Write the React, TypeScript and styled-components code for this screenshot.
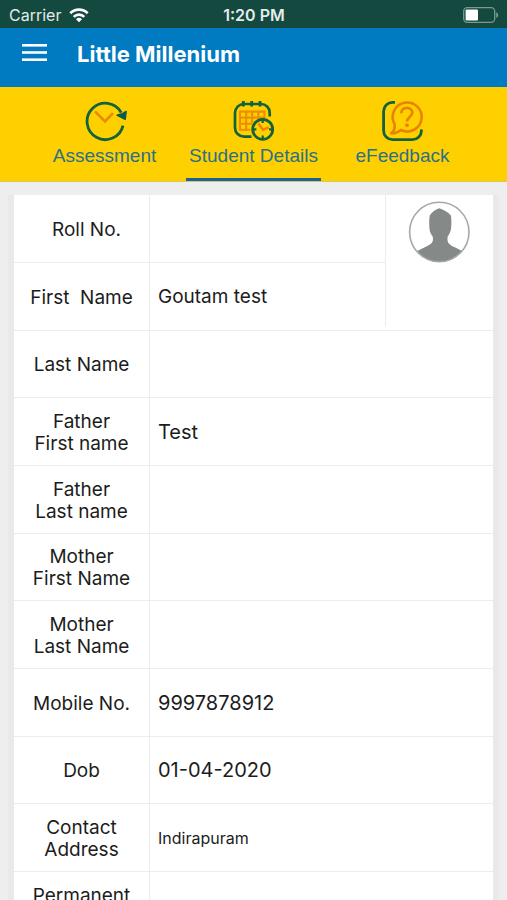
import React from 'react';
import styled, { createGlobalStyle, css } from 'styled-components';

const GlobalStyle = createGlobalStyle`
  *, *::before, *::after { box-sizing: border-box; }
  html, body { margin: 0; padding: 0; background: #eeeeee; }
`;

const Screen = styled.div`
  display: flex;
  flex-direction: column;
  height: 100vh;
  overflow: hidden;
  font-family: Inter, 'Liberation Sans', sans-serif;
  color: #1c1c1c;
`;

const StatusBar = styled.div`
  flex: none;
  display: grid;
  grid-template-columns: 1fr auto 1fr;
  align-items: center;
  height: 28px;
  padding: 2px 8px 0 9px;
  background: #13493f;
  color: #e4ecea;
  font-size: 16px;
  line-height: 20px;
`;

const Carrier = styled.div`
  display: flex;
  align-items: center;
  gap: 8px;
`;

const Clock = styled.time`
  font-weight: 600;
`;

const BatterySlot = styled.div`
  display: flex;
  justify-content: flex-end;
`;

const Header = styled.header`
  flex: none;
  display: flex;
  align-items: center;
  gap: 28px;
  height: 59px;
  padding: 0 20px 8px;
  background: #007ac0;
  color: #ffffff;
`;

const MenuButton = styled.button`
  display: flex;
  padding: 0;
  border: 0;
  background: none;
  color: inherit;
  cursor: pointer;
`;

const Title = styled.h1`
  margin: 0;
  font-size: 22px;
  line-height: 28px;
  font-weight: 700;
`;

const Tabs = styled.nav`
  flex: none;
  display: grid;
  grid-template-columns: repeat(3, 1fr);
  height: 95px;
  padding: 0 30px;
  background: #ffd000;
  border-bottom: 1px solid #e0c659;
`;

const Tab = styled.a<{ $active?: boolean }>`
  display: flex;
  flex-direction: column;
  align-items: center;
  margin: 0 7px;
  padding-top: 12px;
  border-bottom: 3px solid ${(p) => (p.$active ? '#1763a0' : 'transparent')};
  color: #2a7089;
  font-family: 'Liberation Sans', Arial, sans-serif;
  font-size: 19px;
  line-height: 26px;
  white-space: nowrap;
  text-decoration: none;
`;

const Content = styled.main`
  flex: 1;
  min-height: 0;
  overflow-y: auto;
  scrollbar-width: none;
  padding: 13px 8px 0;
  background: #eeeeee;
`;

const Card = styled.div`
  padding: 0 6px;
  background: #e9e9e9;
`;

const DetailsTable = styled.table`
  width: 100%;
  table-layout: fixed;
  border-collapse: separate;
  border-spacing: 0;
  background: #ffffff;
`;

const LabelColumn = styled.col`
  width: 136px;
`;

const PhotoColumn = styled.col`
  width: 108px;
`;

const Row = styled.tr`
  height: 68px;
  &:nth-child(3n) { height: 67px; }
`;

const cellLine = css`
  border-bottom: 1px solid #ececec;
`;

const Label = styled.th<{ $indent?: boolean }>`
  ${cellLine}
  border-right: 1px solid #ececec;
  padding: 2px 0 0 ${(p) => (p.$indent ? '10px' : '0')};
  font-size: 19px;
  line-height: 22px;
  font-weight: 400;
  text-align: center;
  white-space: pre-line;
`;

const Value = styled.td<{ $size?: number }>`
  ${cellLine}
  padding: 0 8px;
  font-size: ${(p) => p.$size ?? 19}px;
  line-height: 22px;
`;

const PhotoCell = styled.td`
  ${cellLine}
  padding: 0;
  vertical-align: top;
`;

const PhotoFrame = styled.div`
  display: flex;
  justify-content: center;
  align-items: flex-start;
  height: 131px;
  padding: 6px 2px 0 0;
  border-left: 1px solid #ececec;
`;

const WifiIcon = () => (
  <svg width="20" height="15" viewBox="0 0 20 15" fill="none" stroke="#fff" strokeWidth="2.6" aria-hidden="true">
    <path d="M1.3 5.2a12.4 12.4 0 0 1 17.4 0" />
    <path d="M4.7 8.8a7.5 7.5 0 0 1 10.6 0" />
    <path d="M10 14.2 7 11.3a4.3 4.3 0 0 1 6 0z" fill="#fff" stroke="none" />
  </svg>
);

const BatteryIcon = () => (
  <svg width="36" height="16" viewBox="0 0 36 16" aria-hidden="true">
    <rect x="0.7" y="0.7" width="31" height="14.6" rx="3.5" fill="none" stroke="#7b9992" strokeWidth="1.3" />
    <rect x="2.6" y="2.6" width="12.4" height="10.8" rx="1" fill="#fff" />
    <path d="M33.2 5.2c2.6.8 2.6 4.8 0 5.6z" fill="#7b9992" />
  </svg>
);

const MenuIcon = () => (
  <svg width="29" height="20" viewBox="0 0 29 20" fill="currentColor" aria-hidden="true">
    <rect x="2" y="0" width="25" height="2.6" />
    <rect x="2" y="7.2" width="25" height="2.6" />
    <rect x="2" y="14.4" width="25" height="2.6" />
  </svg>
);

const AssessmentIcon = () => (
  <svg width="44" height="44" viewBox="0 0 44 44" fill="none" aria-hidden="true">
    <path d="M40 26.6A18.2 18.2 0 1 1 38.2 13.600" stroke="#13623d" strokeWidth="2.8" />
    <path d="M34 16.200 38.600 15 43.200 12.400 42.200 20.400z" fill="#0c5b4a" stroke="#0c5b4a" strokeWidth="1.400" strokeLinejoin="round" />
    <path d="m12 12.3 10 10 8-8.2" stroke="#e98a00" strokeWidth="2.6" />
  </svg>
);

const StudentIcon = () => (
  <svg width="44" height="44" viewBox="1 0 44 44" fill="none" aria-hidden="true">
    <g stroke="#ee8d00" strokeWidth="2.1">
      <path d="M9 12.6h25.2M9 18.6h25.2M9 24.8h12M9 30.8h10.5" />
      <path d="M9 11.7v20M15.2 11.7v20M21.2 11.7v12M27.4 11.7v7M33.4 11.7v7" />
    </g>
    <path
      d="M20.5 37.7H13a9 9 0 0 1-9-9V14a9 9 0 0 1 9-9h17a8.7 8.7 0 0 1 8.7 8.7V17.4"
      stroke="#13623d"
      strokeWidth="2.7"
    />
    <path d="M12.3 2v5.4M20.7 2v5.4M29 2v5.4" stroke="#13623d" strokeWidth="2.8" />
    <circle cx="31.7" cy="30.3" r="10" fill="#ffd000" stroke="#13623d" strokeWidth="2.8" />
    <path d="M31.700 21v3M31.700 36.600v3M22.400 30.300h3M38 30.300h3" stroke="#13623d" strokeWidth="2.200" />
    <path d="m27.400 24.600 4.600 6.200 5.600-2.400" stroke="#ee8400" strokeWidth="2.500" />
  </svg>
);

const FeedbackIcon = () => (
  <svg width="44" height="44" viewBox="1 0 44 44" fill="none" aria-hidden="true">
    <path
      d="M15 3.400h-2.500a8.900 8.900 0 0 0-8.900 8.900v19.400a8.900 8.900 0 0 0 8.900 8.900h20a8.900 8.900 0 0 0 8.900-8.900V30.400"
      stroke="#13623d"
      strokeWidth="2.8"
    />
    <path
      d="M14.600 25.200A14.500 14.500 0 1 1 20.800 31C18.200 33.400 15 34.400 11.300 34.500 14 32 15.200 29 14.600 25.200z"
      stroke="#e98200"
      strokeWidth="2.6"
      strokeLinejoin="round"
    />
    <path
      d="M21.300 14.200c0-3.500 2.400-5.400 5.500-5.400 3.200 0 5.500 2 5.500 4.800 0 4.500-5.300 4.200-5.300 8.900"
      stroke="#e98200"
      strokeWidth="2.7"
    />
    <circle cx="27" cy="26.200" r="1.900" fill="#e98200" />
  </svg>
);

const Avatar = () => (
  <svg width="62" height="62" viewBox="0 0 62 62" role="img" aria-label="Student photo">
    <path
      d="M31.3 7.3c3 .8 8.3 3.200 11.600 7.200.7 3.500.6 8.500.1 13.500-.5 3.500-2 5.500-3.300 7.500-.5 3.500-.3 5.500 1.300 7.200 3.500 3.300 9 4.500 13 7.300C48.500 57 40.500 61 31.300 61S14 57 9.500 50c4-2.800 9.500-4.200 13.500-7.300 2-1.700 2.300-4 1.700-7.200-1.500-2-2.900-4-3.200-7.500-.4-5-.4-10 .2-13.500C24.500 10.500 28 8.200 31.300 7.300z"
      fill="#858988"
    />
    <circle cx="31.300" cy="31" r="29.700" fill="none" stroke="#a6a8a8" strokeWidth="1.600" />
  </svg>
);

interface Detail {
  label: string;
  value: string;
  size?: number;
  indent?: boolean;
}

const details: Detail[] = [
  { label: 'Roll No.', value: '', indent: true },
  { label: 'First \u00a0Name', value: 'Goutam test' },
  { label: 'Last Name', value: '' },
  { label: 'Father\nFirst name', value: 'Test', size: 20 },
  { label: 'Father\nLast name', value: '' },
  { label: 'Mother\nFirst Name', value: '' },
  { label: 'Mother\nLast Name', value: '' },
  { label: 'Mobile No.', value: '9997878912', size: 20 },
  { label: 'Dob', value: '01-04-2020', size: 20 },
  { label: 'Contact\nAddress', value: 'Indirapuram', size: 16 },
  { label: 'Permanent\nAddress', value: '' },
];

export default function App() {
  return (
    <Screen>
      <GlobalStyle />
      <StatusBar>
        <Carrier>
          Carrier
          <WifiIcon />
        </Carrier>
        <Clock>1:20 PM</Clock>
        <BatterySlot>
          <BatteryIcon />
        </BatterySlot>
      </StatusBar>
      <Header>
        <MenuButton type="button" aria-label="Menu">
          <MenuIcon />
        </MenuButton>
        <Title>Little Millenium</Title>
      </Header>
      <Tabs>
        <Tab href="#assessment">
          <AssessmentIcon />
          Assessment
        </Tab>
        <Tab href="#details" $active aria-current="page">
          <StudentIcon />
          Student Details
        </Tab>
        <Tab href="#feedback">
          <FeedbackIcon />
          eFeedback
        </Tab>
      </Tabs>
      <Content>
        <Card>
          <DetailsTable>
            <colgroup>
              <LabelColumn />
              <col />
              <PhotoColumn />
            </colgroup>
            <tbody>
              {details.map((item, index) => (
                <Row key={item.label}>
                  <Label scope="row" $indent={item.indent}>
                    {item.label}
                  </Label>
                  <Value $size={item.size} colSpan={index < 2 ? 1 : 2}>
                    {item.value}
                  </Value>
                  {index === 0 && (
                    <PhotoCell rowSpan={2}>
                      <PhotoFrame>
                        <Avatar />
                      </PhotoFrame>
                    </PhotoCell>
                  )}
                </Row>
              ))}
            </tbody>
          </DetailsTable>
        </Card>
      </Content>
    </Screen>
  );
}
